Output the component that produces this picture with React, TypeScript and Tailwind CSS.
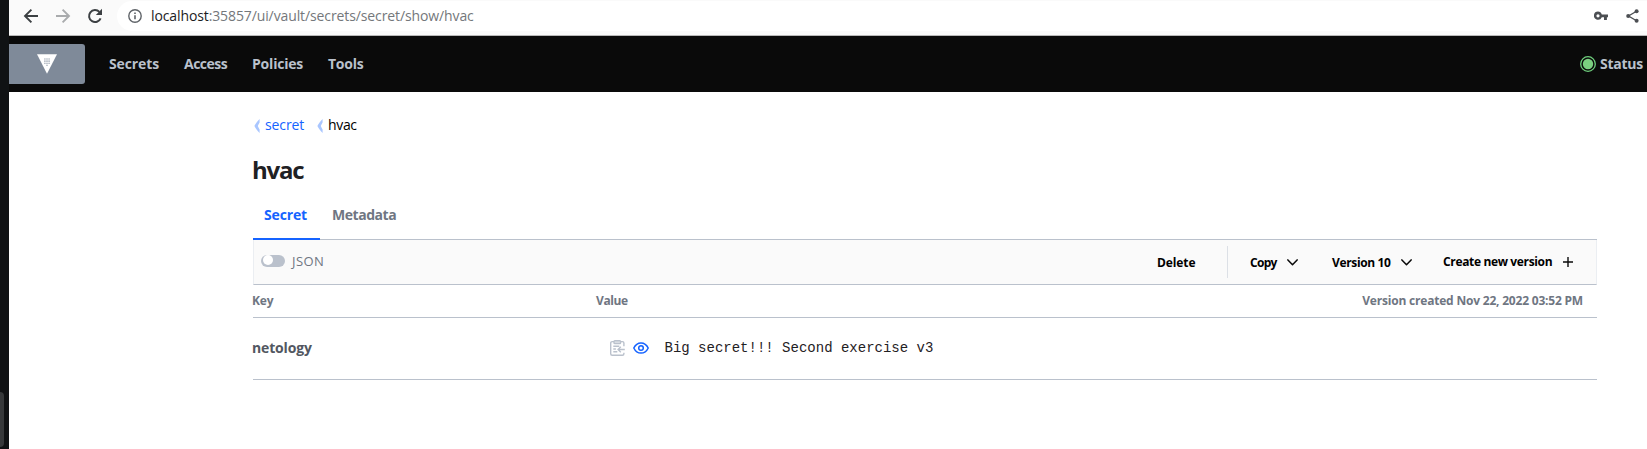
import type { ReactNode } from "react";

function BrowserBar() {
  return (
    <div className="flex h-9 items-start border-b border-[#b9b9b9] bg-[#fafafa]">
      <svg className="ml-[14px] mt-[8px] h-4 w-4 shrink-0" viewBox="0 0 16 16" fill="none" stroke="#3c4043" strokeWidth="1.9">
        <path d="M15 8H2.2M8.4 1.6L2 8l6.4 6.4" />
      </svg>
      <svg className="ml-4 mt-[8px] h-4 w-4 shrink-0" viewBox="0 0 16 16" fill="none" stroke="#a9abad" strokeWidth="1.9">
        <path d="M1 8h12.8M7.6 1.6L14 8l-6.4 6.4" />
      </svg>
      <svg className="ml-4 mt-[8px] h-4 w-4 shrink-0" viewBox="0 0 16 16">
        <path d="M13.6 10.3A6 6 0 1 1 12.4 3.9" fill="none" stroke="#3c4043" strokeWidth="2" />
        <path d="M15 0.8V7H8.8z" fill="#3c4043" />
      </svg>
      <div className="ml-[14px] mt-px flex h-[30px] min-w-0 flex-1 items-center rounded-l-full bg-white pl-[11px]">
        <svg className="h-[14px] w-[14px] shrink-0" viewBox="0 0 14 14" fill="none" stroke="#5f6368" strokeWidth="1.4">
          <circle cx="7" cy="7" r="6.2" />
          <path d="M7 6.2v4.1M7 3.5v1.5" strokeWidth="1.6" />
        </svg>
        <span className="ml-[9px] whitespace-nowrap text-[14px] leading-5 tracking-[-0.11px] text-[#74777b]">
          <span className="text-[#1b1c1e]">localhost</span>:35857/ui/vault/secrets/secret/show/hvac
        </span>
        <svg className="ml-auto h-[10px] w-[14px] shrink-0" viewBox="0 0 14 10" fill="#4c4f53">
          <path fillRule="evenodd" d="M4 0.600a4.100 4.100 0 1 0 3.800 5.600H10V9h2.900V6.200H14V3.500H7.800A4.100 4.100 0 0 0 4 0.600zm0 2.600a1.600 1.600 0 1 1 0 3.200 1.600 1.600 0 0 1 0-3.200z" />
        </svg>
        <svg className="ml-[18px] mr-[8px] h-[14px] w-[13px] shrink-0" viewBox="0 0 13 14" fill="#4c4f53">
          <path d="M10.5 2.2L2.5 7l8 4.8" fill="none" stroke="#4c4f53" strokeWidth="1.3" />
          <circle cx="2.200" cy="7" r="2" />
          <circle cx="10.600" cy="2.200" r="2" />
          <circle cx="10.600" cy="11.800" r="2" />
        </svg>
      </div>
    </div>
  );
}

function VaultLogo() {
  return (
    <svg className="h-5 w-5" viewBox="0 0 20 20">
      <path d="M0 0.2h20L10 19.8z" fill="#fff" />
      <path d="M7.2 5h1.4M9.3 5h1.4M11.4 5h1.4M7.2 7.1h1.4M9.3 7.1h1.4M11.4 7.1h1.4M7.2 9.2h1.4M9.3 9.2h1.4M11.4 9.2h1.4M9.3 11.3h1.4" stroke="#8f99a7" strokeWidth="1.1" />
    </svg>
  );
}

function NavBar() {
  return (
    <nav className="flex h-14 items-center bg-[#0a0a0a] text-[14px] font-bold leading-5 text-[#bac1cc]">
      <div className="flex h-10 w-[76px] items-center justify-center rounded-r-[3px] bg-[#7f8a99]">
        <VaultLogo />
      </div>
      <span className="ml-6 w-[75px] tracking-[-0.12px]">Secrets</span>
      <span className="w-[68px] tracking-[-0.5px]">Access</span>
      <span className="w-[76px] tracking-[-0.2px]">Policies</span>
      <span className="tracking-[-0.25px]">Tools</span>
      <svg className="ml-auto h-4 w-4" viewBox="0 0 16 16">
        <circle cx="8" cy="8" r="7.3" fill="none" stroke="#6fcf7d" strokeWidth="1.3" />
        <circle cx="8" cy="8" r="5.2" fill="#7bcf80" />
      </svg>
      <span className="ml-1 w-[47px] tracking-[-0.25px]">Status</span>
    </nav>
  );
}

function Crumb({ children }: { children: ReactNode }) {
  return (
    <span className="flex items-center">
      <svg className="mr-[5px] mt-[2px] h-[14px] w-[6px]" viewBox="0 0 6 14" fill="#a9c6ff">
        <path d="M5.600 0v3.600C4.900 4.700 4.300 5.800 3.800 7c.5 1.200 1.100 2.300 1.800 3.400V14C3.300 11.700 1.600 9.400.4 7 1.600 4.600 3.300 2.300 5.600 0z" />
      </svg>
      {children}
    </span>
  );
}

function Chevron() {
  return (
    <svg className="mt-px h-[7px] w-[11px]" viewBox="0 0 11 7" fill="none" stroke="#0a0a0a" strokeWidth="1.5" strokeLinecap="round" strokeLinejoin="round">
      <path d="M0.9 0.9l4.6 4.9 4.6-4.9" />
    </svg>
  );
}

function Toolbar() {
  return (
    <div className="flex h-[45px] items-center border-x border-b border-x-[#ebeef2] border-b-[#bac1cc] bg-[#fafafa] text-[12px] font-bold leading-5 text-black">
      <div className="mb-[2px] ml-[7px] flex h-3 w-6 items-center rounded-full bg-[#bac1cc] pl-[2px]">
        <div className="-mt-[2px] h-[10px] w-[10px] rounded-full bg-white" />
      </div>
      <span className="mb-[3px] ml-[7px] text-[13px] font-normal tracking-[0.4px] text-[#6f7682]">JSON</span>
      <div className="ml-auto flex items-center">
        <span className="mt-[2px] w-[70px] tracking-[-0.1px]">Delete</span>
        <div className="h-8 w-px bg-[#dce0e6]" />
        <span className="ml-[22px] mt-[2px] w-[37px] tracking-[-0.7px]">Copy</span>
        <Chevron />
        <span className="ml-[34px] mt-[2px] w-[69px] tracking-[-0.35px]">Version 10</span>
        <Chevron />
        <span className="ml-[31px] w-[120px] tracking-[-0.35px]">Create new version</span>
        <svg className="mr-[23px] h-[10px] w-[10px]" viewBox="0 0 10 10" stroke="#0a0a0a" strokeWidth="1.4">
          <path d="M5 0v10M0 5h10" />
        </svg>
      </div>
    </div>
  );
}

function ClipboardIcon() {
  return (
    <svg className="h-4 w-[15px]" viewBox="0 0 15 16" fill="none" stroke="#bac1cc" strokeWidth="1.4">
      <path d="M4 1.600H2.200c-.9 0-1.500.6-1.500 1.500v10.700c0 .9.6 1.500 1.500 1.500h10.200c.9 0 1.500-.6 1.500-1.500v-1M10.600 1.600h1.800c.9 0 1.500.6 1.500 1.500v3.200" />
      <rect x="4" y="0.7" width="6.6" height="2.8" rx="0.8" fill="#e3e6eb" />
      <path d="M3.300 6.300h6M3.300 9h2.600M3.300 11.700h4" />
      <path d="M14.800 9.500H8.200M10.800 6.800L8.100 9.500l2.700 2.700" />
    </svg>
  );
}

function EyeIcon() {
  return (
    <svg className="h-3 w-4" viewBox="0 0 16 12" fill="none" stroke="#1563ff" strokeWidth="1.5">
      <path d="M.8 6C2.300 2.800 4.800.9 8 .9S13.700 2.800 15.200 6C13.700 9.200 11.200 11.100 8 11.100S2.300 9.200.8 6z" />
      <circle cx="8" cy="6" r="2.3" />
    </svg>
  );
}

export default function App() {
  return (
    <div className="flex h-[449px] w-full overflow-hidden bg-white font-['Open_Sans','Noto_Sans',sans-serif]">
      <aside className="flex w-[9px] shrink-0 items-end bg-[#101214]">
        <div className="mb-[2px] h-[55px] w-1 rounded-r-[4px] bg-[#37393b]" />
      </aside>
      <div className="min-w-0 flex-1">
        <BrowserBar />
        <NavBar />
        <main className="ml-[244px] w-[1344px]">
          <div className="mt-[23px] flex h-5 items-center pl-px text-[14px] leading-5">
            <Crumb>
              <a className="w-[52px] tracking-[-0.1px] text-[#1563ff]">secret</a>
            </Crumb>
            <Crumb>
              <span className="tracking-[-0.35px] text-black">hvac</span>
            </Crumb>
          </div>
          <h1 className="-ml-px mt-[19px] text-[24px] font-bold leading-8 tracking-[-1.2px] text-[#1f2124]">hvac</h1>
          <div className="mt-[14px] flex h-[40px] border-b border-[#bac1cc] text-[14px] font-bold leading-5">
            <div className="-mb-px h-[40px] w-[67px] border-b-2 border-[#1563ff] pl-[11px] pt-[5px] tracking-[-0.15px] text-[#1563ff]">Secret</div>
            <div className="pl-3 pt-[5px] tracking-[-0.45px] text-[#6f7682]">Metadata</div>
          </div>
          <Toolbar />
          <div className="flex h-[33px] items-center border-b border-[#bac1cc] text-[12px] font-bold leading-5 text-[#6f7682]">
            <span className="-ml-px w-[344px] tracking-[-0.1px]">Key</span>
            <span className="tracking-[-0.4px]">Value</span>
            <span className="ml-auto mr-[14px] tracking-[-0.2px]">Version created Nov 22, 2022 03:52 PM</span>
          </div>
          <div className="flex h-[62px] items-center border-b border-[#bac1cc]">
            <span className="-ml-px mb-[2px] w-[358px] text-[14px] font-bold leading-5 tracking-[-0.15px] text-[#525761]">netology</span>
            <div className="mb-px flex items-center gap-2">
              <ClipboardIcon />
              <EyeIcon />
            </div>
            <span className="mb-[2px] ml-[15.5px] whitespace-nowrap font-['Liberation_Mono',monospace] text-[14px] leading-5 text-[#1f2124]">
              Big secret!!! Second exercise v3
            </span>
          </div>
        </main>
      </div>
    </div>
  );
}
